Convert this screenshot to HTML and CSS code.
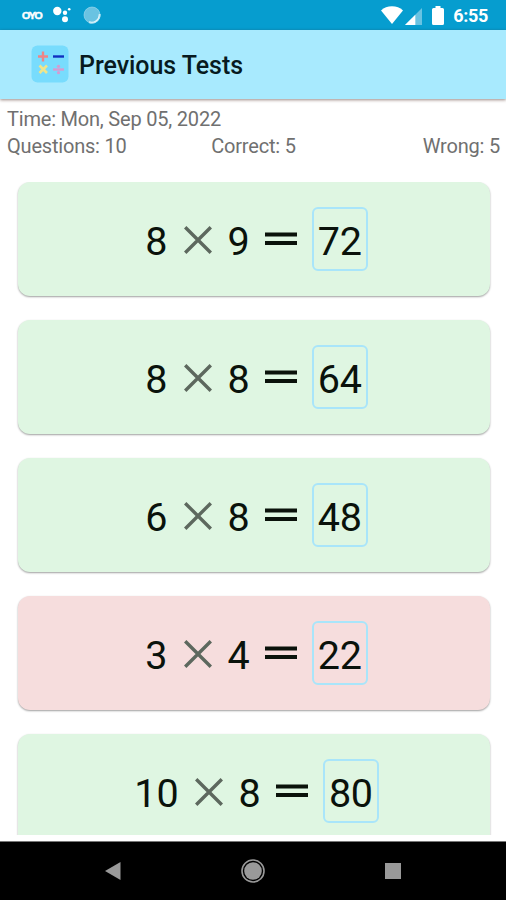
FILE: index.html
```html
<!DOCTYPE html>
<html lang="en">
<head>
<meta charset="utf-8">
<title>Previous Tests</title>
<link rel="stylesheet" href="styles.css">
</head>
<body>
<svg class="symbols" aria-hidden="true">
  <symbol id="times" viewBox="0 0 28 28"><path d="M1.2 1.2 26.8 26.8M26.8 1.2 1.2 26.8" stroke="currentColor" stroke-width="3.4"/></symbol>
  <symbol id="equals" viewBox="0 0 32 14"><path d="M0 2.5H32M0 11H32" stroke="currentColor" stroke-width="3.8"/></symbol>
</svg>
<div class="screen">
  <div class="status">
    <span class="carrier">OYO</span>
    <svg class="assistant" width="18" height="18" viewBox="0 0 18 18" fill="#fff"><circle cx="4.3" cy="5" r="4.2"/><circle cx="12" cy="6.8" r="2.2"/><circle cx="16.2" cy="3.2" r="1.3"/><circle cx="12" cy="13.3" r="3"/></svg>
    <svg class="sync" width="18" height="18" viewBox="0 0 18 18"><circle cx="9" cy="9" r="8" fill="#69c3e2"/><path d="M6 16.2A8 8 0 0 0 16.6 8" fill="none" stroke="#e6f8fd" stroke-width="1.8"/><circle cx="9" cy="9" r="8" fill="none" stroke="#a6dcee" stroke-width=".6"/></svg>
    <div class="system">
      <svg width="22" height="18" viewBox="0 0 22 18"><path d="M11 18 0 4.4Q4.500 .3 11 .3T22 4.400Z" fill="#fff"/></svg>
      <svg class="signal" width="17" height="17" viewBox="0 0 17 17"><path d="M17 0V17H0Z" fill="#69c3e2"/><path d="M10.300 6.700V17H0Z" fill="#fff"/></svg>
      <svg class="battery" width="12" height="19" viewBox="0 0 12 19"><path d="M3.500 0h5v2H10.500Q12 2 12 3.500v14Q12 19 10.500 19h-9Q0 19 0 17.500v-14Q0 2 1.500 2h2Z" fill="#fff"/></svg>
      <span class="clock">6:55</span>
    </div>
  </div>
  <header class="appbar">
    <svg width="38" height="38" viewBox="0 0 38 38" fill="none">
      <rect x=".5" y=".5" width="37" height="37" rx="6" fill="#78dcfd"/>
      <path d="M7 11.500H17M12 6.500V16.500" stroke="#ee8587" stroke-width="2.400"/>
      <path d="M22 11.500H33" stroke="#1030c0" stroke-width="2.400"/>
      <path d="M8.500 20.500 16 28M16 20.500 8.500 28" stroke="#f0e58a" stroke-width="2.600"/>
      <path d="M22 24.500H33" stroke="#d69bd1" stroke-width="2.400"/>
      <circle cx="27.500" cy="21.300" r="1.600" fill="#d69bd1"/><circle cx="27.500" cy="27.700" r="1.600" fill="#d69bd1"/>
    </svg>
    <h1>Previous Tests</h1>
  </header>
  <section class="summary">
    <div>Time: Mon, Sep 05, 2022</div>
    <div class="totals"><span>Questions: 10</span><span>Correct: 5</span><span>Wrong: 5</span></div>
  </section>
  <main class="list">
    <div class="card"><span>8</span><svg class="times"><use href="#times"/></svg><span>9</span><svg class="equals"><use href="#equals"/></svg><span class="answer">72</span></div>
    <div class="card"><span>8</span><svg class="times"><use href="#times"/></svg><span>8</span><svg class="equals"><use href="#equals"/></svg><span class="answer">64</span></div>
    <div class="card"><span>6</span><svg class="times"><use href="#times"/></svg><span>8</span><svg class="equals"><use href="#equals"/></svg><span class="answer">48</span></div>
    <div class="card wrong"><span>3</span><svg class="times"><use href="#times"/></svg><span>4</span><svg class="equals"><use href="#equals"/></svg><span class="answer">22</span></div>
    <div class="card"><span>10</span><svg class="times"><use href="#times"/></svg><span>8</span><svg class="equals"><use href="#equals"/></svg><span class="answer">80</span></div>
  </main>
  <nav class="navbar">
    <svg width="16" height="18" viewBox="0 0 16 18"><path d="M15.500 0V18L0 9Z" fill="#999"/></svg>
    <svg width="24" height="24" viewBox="0 0 24 24"><circle cx="12" cy="12" r="11" fill="none" stroke="#999" stroke-width="1.600"/><circle cx="12" cy="12" r="8.800" fill="#999"/></svg>
    <svg width="16" height="16" viewBox="0 0 16 16"><path d="M0 0H16V16H0Z" fill="#999"/></svg>
  </nav>
</div>
</body>
</html>
```
FILE: styles.css
```css
* { box-sizing: border-box; }
body { margin: 0; font-family: Roboto, "Liberation Sans", sans-serif; background: #fff; }
svg { display: block; flex: none; }
.symbols { position: absolute; width: 0; height: 0; }
.screen { display: flex; flex-direction: column; width: 506px; height: 900px; overflow: hidden; }

.status { display: flex; align-items: center; flex: none; height: 30px; padding: 0 18px 0 22px; background: #069dcf; color: #fff; }
.carrier { width: 21px; font: 900 10px/10px Lato, sans-serif; letter-spacing: -.6px; -webkit-text-stroke: .5px #fff; }
.assistant { margin-left: 10px; }
.sync { margin-left: 12px; }
.system { display: flex; align-items: center; margin-left: auto; }
.signal { margin-left: 2px; margin-top: 2px; }
.battery { margin-left: 10px; }
.clock { margin-left: 9px; font-size: 18px; font-weight: 700; line-height: 30px; padding-top: 2px; letter-spacing: -.3px; }

.appbar { display: flex; align-items: center; flex: none; gap: 10px; height: 69px; padding: 0 31px 2px; background: #a8eafe; box-shadow: 0 1px 3px rgba(60, 20, 10, .5); z-index: 1; }
h1 { margin: 5px 0 0; font-size: 25px; font-weight: 500; line-height: 30px; letter-spacing: -.05px; color: #071a20; }

.summary { flex: none; height: 83px; padding: 7px 6px 0 7px; font-size: 20px; line-height: 27px; letter-spacing: -.2px; color: #707070; }
.totals { display: grid; grid-template-columns: repeat(3, 1fr); }
.totals span:nth-child(2) { text-align: center; }
.totals span:nth-child(3) { text-align: right; }

.list { display: flex; flex-direction: column; gap: 24px; flex: none; height: 653px; padding: 0 16px 0 18px; overflow: hidden; }
.card { display: flex; align-items: center; justify-content: center; flex: none; height: 114px; border-radius: 12px; background: #dff6e2; box-shadow: 0 1px 2px rgba(0, 0, 0, .38); font-size: 39.5px; line-height: 47px; color: #0a120b; padding-left: 5px; }
.card.wrong { background: #f6dddd; }
.card > span:not(.answer) { margin-top: 5px; }
.times { width: 28px; height: 28px; margin: 2px 16px 0; color: #5d685e; }
.equals { width: 32px; height: 14px; margin: 0 15px; color: #0a120b; }
.answer { width: 56px; height: 64px; border: 2px solid #a9e5fa; border-radius: 6px; line-height: 65px; text-align: center; letter-spacing: -.3px; }

.navbar { display: flex; align-items: center; justify-content: space-between; flex: 1; margin-top: 6px; padding: 0 105px; border-top: 1px solid #777; background: #000; }
```
